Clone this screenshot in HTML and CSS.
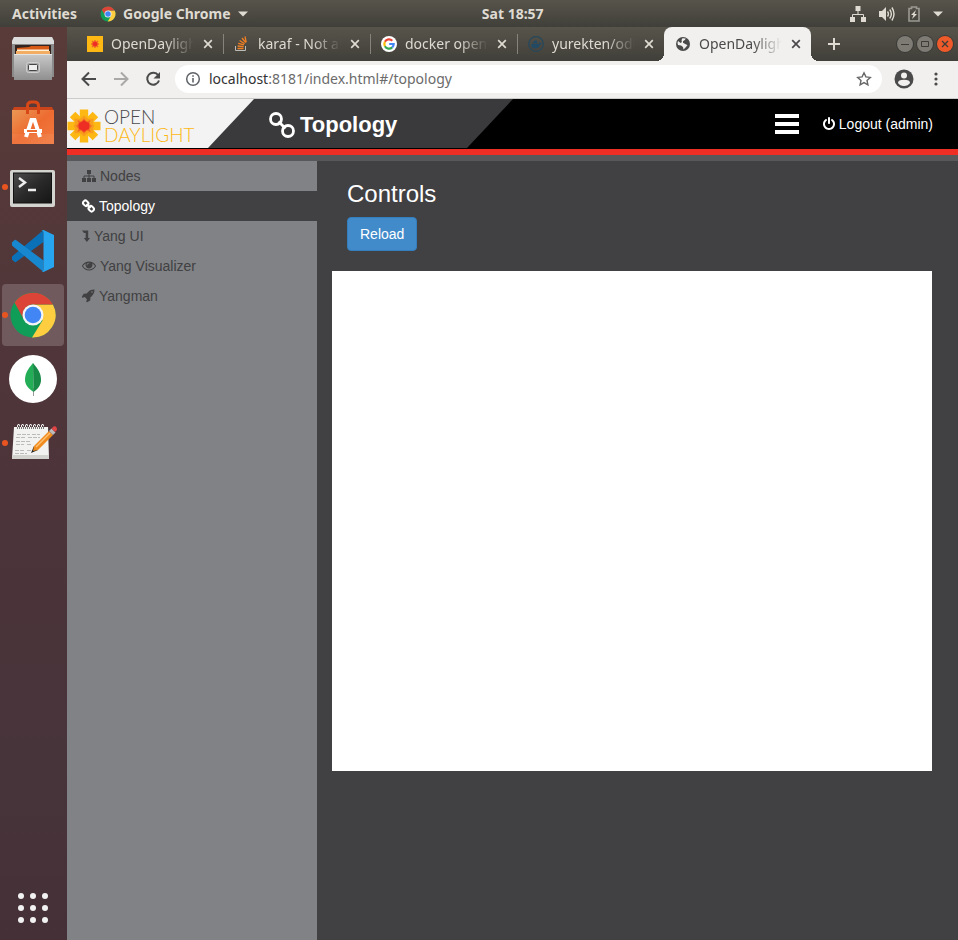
FILE: index.html
```html
<!DOCTYPE html>
<html lang="en">
<head>
<meta charset="utf-8">
<meta name="viewport" content="width=device-width, initial-scale=1">
<title>OpenDaylight Dlux</title>
<link rel="stylesheet" href="styles.css">
</head>
<body>
<svg class="defs" aria-hidden="true">
  <defs>
    <symbol id="chrome" viewBox="0 0 48 48">
      <circle cx="24" cy="24" r="22.500" fill="#109d58"/>
      <path d="M24 13.500H43.900A22.500 22.500 0 0 1 23 46.500L33.500 29.500Z" fill="#ffcd40"/>
      <path d="M5.500 11.500A22.500 22.500 0 0 1 43.900 13.500H24A10.500 10.500 0 0 0 14.500 28Z" fill="#db4437"/>
      <circle cx="24" cy="24" r="10.500" fill="#f5f5f5"/>
      <circle cx="24" cy="24" r="8.300" fill="#4285f4"/>
    </symbol>
    <symbol id="cross" viewBox="0 0 10 10">
      <path d="M1.200 1.200 8.800 8.800M8.800 1.200 1.200 8.800" fill="none" stroke="currentColor" stroke-width="1.700"/>
    </symbol>
    <symbol id="link" viewBox="0 0 26 26">
      <g fill="none" stroke="currentColor" stroke-width="2.800">
        <circle cx="7" cy="7" r="5.500"/><circle cx="19" cy="19" r="5.500"/><path d="M9.500 9.500l7 7"/>
      </g>
    </symbol>
  </defs>
</svg>

<header class="panel">
  <div class="panel-left">
    <button class="panel-item" type="button">Activities</button>
    <button class="panel-item app-menu" type="button">
      <svg width="16" height="16" aria-hidden="true"><use href="#chrome"/></svg>
      <span>Google Chrome</span>
      <svg width="10" height="6" viewBox="0 0 10 6" aria-hidden="true"><path d="M0 .5h10L5 5.500Z" fill="currentColor"/></svg>
    </button>
  </div>
  <time class="clock">Sat 18:57</time>
  <div class="tray">
    <svg width="16" height="16" viewBox="0 0 16 16" aria-hidden="true"><path d="M5.500 0h5v5h-5zM0 11h5v5H0zM11 11h5v5h-5z" fill="currentColor"/><path d="M8 5v3M2.500 11V8.500h11V11" fill="none" stroke="currentColor"/></svg>
    <svg width="16" height="16" viewBox="0 0 16 16" aria-hidden="true"><path d="M0 5h3l4-4v14l-4-4H0Z" fill="currentColor"/><path d="M8.500 5.500q1.800 2.500 0 5M10.700 3.500q3.300 4.500 0 9M12.900 1.500q4.200 6.500 0 13" fill="none" stroke="currentColor" stroke-width="1.400"/></svg>
    <svg width="12" height="16" viewBox="0 0 12 16" aria-hidden="true"><path d="M1 2.500h2.500V1h5v1.500H11V15H1Z" fill="none" stroke="#9b9993" stroke-width="1.600"/><path d="M8 4 3 9h2.500L4 13l5-5H6.500Z" fill="currentColor"/></svg>
    <svg width="10" height="6" viewBox="0 0 10 6" aria-hidden="true"><path d="M0 .5h10L5 5.500Z" fill="currentColor"/></svg>
  </div>
</header>

<div class="desktop">
  <nav class="dock" aria-label="Launcher">
    <button class="dock-item" type="button" aria-label="Files">
      <svg width="48" height="48" viewBox="0 0 48 48" aria-hidden="true">
        <defs><linearGradient id="steel" x2="0" y2="1"><stop stop-color="#c9c9c9"/><stop offset="1" stop-color="#8f8f8f"/></linearGradient></defs>
        <path d="M5 2h38l2 4v36H3V6Z" fill="#8b8b8b"/><path d="M5 2h38l2 4v3H3V6Z" fill="#dcdcdc"/>
        <path d="M6 10h36v10H6Z" fill="#332420"/><path d="M8 13l12-1 2-1h18v9H8Z" fill="#d75b16"/><path d="M7 16h34v4H7Z" fill="#f3ad62"/><path d="M8 14.500h32v1.500H8Z" fill="#fff0d8"/>
        <path d="M5 19h38v26H5Z" fill="url(#steel)"/><path d="M5 19h38v1H5Z" fill="#e4e4e4"/>
        <rect x="17.500" y="27.500" width="13" height="10" rx="2" fill="#aaa" stroke="#cfcfcf"/><rect x="19.500" y="29.500" width="9" height="6" rx="1" fill="#eee" stroke="#444"/>
      </svg>
    </button>
    <button class="dock-item" type="button" aria-label="Ubuntu Software">
      <svg width="48" height="48" viewBox="0 -1 48 48" aria-hidden="true">
        <defs><linearGradient id="bag" x2="1" y2="1"><stop stop-color="#e99855"/><stop offset=".5" stop-color="#ee6b30"/><stop offset="1" stop-color="#f17c43"/></linearGradient></defs>
        <path d="M5 7h38l2 4H3Z" fill="#c9441a"/><path d="M3 10h42v34H3Z" fill="url(#bag)"/><path d="M3 34h42v10H3Z" fill="#fff" opacity=".06"/>
        <path d="M18.500 14V6q0-4 4-4h3q4 0 4 4v8" fill="none" stroke="#d84817" stroke-width="3"/>
        <path d="M17 37 22.500 20h3L31 37M15 31h18" fill="none" stroke="#fff" stroke-width="4"/><path d="M18 31h10" stroke="#ee6b30" stroke-width="2"/>
      </svg>
    </button>
    <button class="dock-item running" type="button" aria-label="Terminal">
      <svg width="48" height="48" viewBox="0 -1 48 48" aria-hidden="true">
        <defs><linearGradient id="screen" x2="1" y2="1"><stop stop-color="#4c4c4c"/><stop offset=".5" stop-color="#2a2a2a"/><stop offset="1" stop-color="#151515"/></linearGradient></defs>
        <rect x="1" y="6" width="45" height="37" rx="2" fill="#d3d3d0"/><rect x="4.500" y="9" width="38" height="30" fill="url(#screen)" stroke="#111"/>
        <path d="m10 14 6 4.500L10 23M19 26h8" fill="none" stroke="#eee" stroke-width="2.400"/>
      </svg>
    </button>
    <button class="dock-item" type="button" aria-label="Visual Studio Code">
      <svg width="48" height="48" viewBox="0 0 48 48" aria-hidden="true">
        <path d="M3 29.500 34.500 3v12L7 35q-1 .5-2-.5l-2-2Z" fill="#0a70b8"/><path d="M7 13q-1-.5-2 .5l-2 2V18.500L34.500 45V33.500Z" fill="#1788d0"/><path d="M32.500 3.500 34.500 3 45 8v32l-10.500 5-2-.5q2 .5 2-2v-37q0-2-2-2Z" fill="#27a5ef"/>
      </svg>
    </button>
    <button class="dock-item running active" type="button" aria-label="Google Chrome">
      <svg width="48" height="48" aria-hidden="true"><use href="#chrome"/></svg>
    </button>
    <button class="dock-item" type="button" aria-label="MongoDB Compass">
      <svg width="48" height="48" viewBox="0 0 48 48" aria-hidden="true">
        <circle cx="24" cy="24" r="24" fill="#fff"/><path d="M24 33h1v8h-1Z" fill="#999"/><path d="M24 8C19 14 16 18 16 25c0 5 4 9 8.500 12Z" fill="#23ad56"/><path d="M24 8c5 6 8 10 8 17 0 5-3 9-7.500 12Z" fill="#178a48"/>
      </svg>
    </button>
    <button class="dock-item running" type="button" aria-label="Text Editor">
      <svg width="48" height="48" viewBox="0 0 48 48" aria-hidden="true">
        <path d="M5 8h34l1 32H3Z" fill="#f2f2f0"/><path d="M3 36h37v4H3Z" fill="#d2d2cf"/>
        <path d="M8 15.500h13m2 0h8M7 18.500h9m3 0h12M7 22.500h14M7 25.500h8m3 0h5M6 31.500h9m3 0h6M6 34.500h12" stroke="#bbb" stroke-dasharray="4 1" fill="none"/>
        <path d="M8.500 10V6q2-2 2 1v3m2 0V6q2-2 2 1v3m2 0V6q2-2 2 1v3m2 0V6q2-2 2 1v3m2 0V6q2-2 2 1v3m2 0V6q2-2 2 1v3m2 0V6q2-2 2 1v3" fill="none" stroke="#777"/><path d="M8.500 8V6q2-2 2 1m2 1V6q2-2 2 1m2 1V6q2-2 2 1m2 1V6q2-2 2 1m2 1V6q2-2 2 1m2 1V6q2-2 2 1m2 1V6q2-2 2 1" fill="none" stroke="#eee"/>
        <path d="m22 34 3-7 4 4Z" fill="#222"/><path d="m25 27 15-15 4 4-15 15-5 1Z" fill="#f08c1e"/><path d="m27 28 14-14" stroke="#ffc070" stroke-width="1.500"/><path d="m40 12 2.500-2.500 4 4L44 16Z" fill="#bbb"/><path d="m42.500 9.500 2-2q2-1 3 1t0 3l-1.500 1.500Z" fill="#e04444"/>
      </svg>
    </button>
    <button class="dock-item app-grid" type="button" aria-label="Show Applications">
      <svg width="32" height="32" viewBox="0 0 32 32" fill="#f2f2f2" aria-hidden="true">
        <circle cx="4" cy="4" r="3"/><circle cx="16" cy="4" r="3"/><circle cx="28" cy="4" r="3"/><circle cx="4" cy="16" r="3"/><circle cx="16" cy="16" r="3"/><circle cx="28" cy="16" r="3"/><circle cx="4" cy="28" r="3"/><circle cx="16" cy="28" r="3"/><circle cx="28" cy="28" r="3"/>
      </svg>
    </button>
  </nav>

  <div class="browser">
    <div class="tabstrip">
      <div class="tabs">
        <div class="tab">
          <svg width="16" height="16" viewBox="0 0 16 16" aria-hidden="true"><path d="M0 0h16v16H0Z" fill="#fdb813"/><path d="M8 4v8M4 8h8M5 5l6 6M11 5l-6 6" stroke="#f0672a" stroke-width="1.500"/><circle cx="8" cy="8" r="2.500" fill="#ee2e24"/></svg>
          <span class="tab-title">OpenDaylight Dlux</span>
          <button class="tab-close" type="button" aria-label="Close tab"><svg width="10" height="10"><use href="#cross"/></svg></button>
        </div>
        <div class="tab">
          <svg width="16" height="16" viewBox="0 0 16 16" fill="none" aria-hidden="true"><path d="M1.500 10v4.500h10V10" stroke="#bcbbb8"/><path d="M3.500 12.500h6M3.600 10l6 .7M4.200 7.300l5.800 1.600M5.600 4.500l5 3.200M8 2l3.700 4.700M11 .5l1.200 5.800" stroke="#f48024" stroke-width="1.300"/></svg>
          <span class="tab-title">karaf - Not able to</span>
          <button class="tab-close" type="button" aria-label="Close tab"><svg width="10" height="10"><use href="#cross"/></svg></button>
        </div>
        <div class="tab">
          <svg width="16" height="16" viewBox="0 0 16 16" fill="none" stroke-width="2.200" aria-hidden="true"><circle cx="8" cy="8" r="8" fill="#fff"/><path d="M11.300 4.700A4.700 4.700 0 0 0 3.900 5.800" stroke="#ea4335"/><path d="M3.900 5.800a4.700 4.700 0 0 0 0 4.400" stroke="#fbbc05"/><path d="M3.900 10.200a4.700 4.700 0 0 0 7.300 1.200" stroke="#34a853"/><path d="M11.200 11.400A4.700 4.700 0 0 0 12.700 8H8.200" stroke="#4285f4"/></svg>
          <span class="tab-title">docker opendaylight</span>
          <button class="tab-close" type="button" aria-label="Close tab"><svg width="10" height="10"><use href="#cross"/></svg></button>
        </div>
        <div class="tab">
          <svg width="16" height="16" viewBox="0 0 16 16" aria-hidden="true"><circle cx="8" cy="8" r="7.300" fill="none" stroke="#27485c" stroke-width="1.300"/><path d="M3 8h7.500q1 0 1-2 1 .5 1.200 1.500H14Q13 9 12 9q-1.500 3.500-5 3.500Q3 12.500 3 8ZM4.500 6h5v1.500h-5ZM6 4.500h3V6H6Z" fill="#234a62"/></svg>
          <span class="tab-title">yurekten/odl-docker</span>
          <button class="tab-close" type="button" aria-label="Close tab"><svg width="10" height="10"><use href="#cross"/></svg></button>
        </div>
        <div class="tab current">
          <svg width="16" height="16" viewBox="0 0 16 16" aria-hidden="true"><circle cx="8" cy="8" r="7" fill="#4a4a4a"/><path d="M7 2.500q2-.8 4 .3L9.500 4.500 8 5v2l2 .3L12.500 9 11 11l-2.500 2.500L8 11 6 9.500 3 9Q2 7 3 5l2.500 2L7 6l-.5-1Z" fill="#f1f0ef"/><path d="m8 6 3-3 3 3-1 3-3-1Z" fill="#4a4a4a"/></svg>
          <span class="tab-title">OpenDaylight Dlux</span>
          <button class="tab-close" type="button" aria-label="Close tab"><svg width="10" height="10"><use href="#cross"/></svg></button>
        </div>
      </div>
      <button class="new-tab" type="button" aria-label="New tab"><svg width="12" height="12" viewBox="0 0 12 12"><path d="M6 0v12M0 6h12" stroke="currentColor" stroke-width="2"/></svg></button>
      <div class="window-buttons">
        <button class="wbtn" type="button" aria-label="Minimize"><svg width="16" height="16" viewBox="0 0 16 16"><path d="M4 8.500h8" stroke="currentColor"/></svg></button>
        <button class="wbtn" type="button" aria-label="Maximize"><svg width="16" height="16" viewBox="0 0 16 16"><path d="M4.500 5.500h7v5h-7Z" fill="none" stroke="currentColor"/></svg></button>
        <button class="wbtn wclose" type="button" aria-label="Close"><svg width="16" height="16" viewBox="0 0 16 16"><path d="m5 5 6 6M11 5l-6 6" stroke="currentColor" stroke-width="1.300"/></svg></button>
      </div>
    </div>

    <div class="toolbar">
      <button class="tool" type="button" aria-label="Back"><svg width="16" height="16" viewBox="0 0 16 16"><path d="M15 8H2M8 1.500 1.500 8 8 14.500" fill="none" stroke="currentColor" stroke-width="2"/></svg></button>
      <button class="tool off" type="button" aria-label="Forward"><svg width="16" height="16" viewBox="0 0 16 16"><path d="M1 8h13M8 1.500 14.500 8 8 14.500" fill="none" stroke="currentColor" stroke-width="2"/></svg></button>
      <button class="tool" type="button" aria-label="Reload page"><svg width="16" height="16" viewBox="0 0 16 16"><path d="M13.200 4.300A6 6 0 1 0 14 9.500" fill="none" stroke="currentColor" stroke-width="2"/><path d="M15 1v6.500H8.500Z" fill="currentColor"/></svg></button>
      <div class="omnibox">
        <svg width="16" height="16" viewBox="0 0 16 16" aria-hidden="true"><circle cx="8" cy="8" r="6.300" fill="none" stroke="#5f6368" stroke-width="1.500"/><path d="M8 7v4.500M8 4.200v1.600" stroke="#5f6368" stroke-width="1.600"/></svg>
        <a class="url" href="#/topology"><span class="host">localhost</span>:8181/index.html#/topology</a>
        <button class="tool" type="button" aria-label="Bookmark this page"><svg width="16" height="16" viewBox="0 0 16 16"><path d="m8 1.800 1.900 4.100 4.400.5-3.300 3 .9 4.400L8 11.600l-3.900 2.200.9-4.400-3.300-3 4.400-.5Z" fill="none" stroke="#666" stroke-width="1.400"/></svg></button>
      </div>
      <button class="tool" type="button" aria-label="Profile"><svg width="20" height="20" viewBox="0 0 20 20"><circle cx="10" cy="10" r="9.500" fill="currentColor"/><circle cx="10" cy="6.500" r="3" fill="#f1f0ef"/><path d="M4 14q0-3.200 6-3.200t6 3.200q-2 3-6 3t-6-3Z" fill="#f1f0ef"/></svg></button>
      <button class="tool menu" type="button" aria-label="Menu"><svg width="4" height="14" viewBox="0 0 4 14" fill="currentColor"><circle cx="2" cy="2" r="1.600"/><circle cx="2" cy="7" r="1.600"/><circle cx="2" cy="12" r="1.600"/></svg></button>
    </div>

    <div class="page">
      <div class="masthead">
        <div class="brand-bar">
          <a class="logo" href="#/">
            <svg width="34" height="34" viewBox="0 0 34 34" aria-hidden="true">
              <path d="M12.800.5h8.400v33h-8.400ZM.5 12.800h33v8.400H.5Z" fill="#fdb813"/>
              <path d="m8.300 2.800 22.900 22.900-5.500 5.500L2.800 8.300ZM25.700 2.800 2.800 25.700l5.500 5.500L31.200 8.300Z" fill="#fdb813"/>
              <path d="m17 6.500 4.200 3.500 5.400-.6-.6 5.400 1.500 2.200-1.500 2.200.6 5.400-5.400-.6L17 27.500 12.800 24l-5.400.6.6-5.400L6.500 17 8 14.800l-.6-5.400 5.400.6Z" fill="#f99d1c"/>
              <path d="m17 9.500 3 3 3.500-1.500-1 3.500 2.500 2.500-2.500 2.500 1 3.500-3.500-1.500-3 3-3-3-3.500 1.500 1-3.500L9 17l2.500-2.500-1-3.500 3.500 1.500Z" fill="#f36c21"/>
              <path d="m17 11 2.500 2 2.500 1 .5 3-.5 3-2.500 1-2.500 2-2.500-2-2.500-1-.5-3 .5-3 2.500-1Z" fill="#ee2e24"/>
            </svg>
            <span class="wordmark"><span>OPEN</span><span class="gold">DAYLIGHT</span></span>
          </a>
          <div class="page-name"><svg width="26" height="26" aria-hidden="true"><use href="#link"/></svg><span>Topology</span></div>
        </div>
        <div class="actions">
          <button class="burger" type="button" aria-label="Toggle navigation"><svg width="24" height="20" viewBox="0 0 24 20"><path d="M0 0h24v4H0ZM0 8h24v4H0ZM0 16h24v4H0Z" fill="#fff"/></svg></button>
          <a class="logout" href="#/login"><svg width="12" height="14" viewBox="128 0 1536 1792" aria-hidden="true"><path fill="currentColor" d="M1664 896q0 156-61 298t-164 245-245 164-298 61-298-61-245-164-164-245-61-298q0-182 80.500-343t226.500-270q43-32 95.500-25t83.500 50q32 42 24.500 94.500t-49.500 84.500q-98 74-151.500 181t-53.500 228q0 104 40.500 198.500t109.500 163.500 163.500 109.500 198.500 40.500 198.500-40.500 163.500-109.500 109.500-163.500 40.500-198.500q0-121-53.500-228t-151.500-181q-42-32-49.500-84.500t24.500-94.500q31-43 84-50t95 25q146 109 226.500 270t80.500 343zm-640-768v640q0 52-38 90t-90 38-90-38-38-90v-640q0-52 38-90t90-38 90 38 38 90z"/></svg>Logout (admin)</a>
        </div>
      </div>
      <div class="content">
        <nav class="side" aria-label="Modules">
          <a href="#/node"><svg width="14" height="14" viewBox="0 0 14 14" aria-hidden="true"><path d="M5 1h4v4H5ZM0 9h4v4H0ZM5 9h4v4H5ZM10 9h4v4h-4Z" fill="currentColor"/><path d="M7 5v4M2 9V7h10v2" fill="none" stroke="currentColor"/></svg>Nodes</a>
          <a class="selected" href="#/topology"><svg width="13" height="14" viewBox="0 0 26 26" aria-hidden="true"><g fill="none" stroke="currentColor" stroke-width="4"><rect x="2" y="3" width="11" height="9" rx="4" transform="rotate(45 7.500 7.500)"/><rect x="13" y="14" width="11" height="9" rx="4" transform="rotate(45 18.500 18.500)"/><path d="m9 9 8 8"/></g></svg>Topology</a>
          <a href="#/yangui"><svg width="8" height="14" viewBox="0 0 8 14" aria-hidden="true"><path d="M0 1.500h6.200v7.500H8L4.900 13 1.800 9h1.900V4H2Z" fill="currentColor"/></svg>Yang UI</a>
          <a href="#/yangvisualizer"><svg width="14" height="14" viewBox="0 64 1792 1792" aria-hidden="true"><path fill="currentColor" d="M1664 960q-152-236-381-353 61 104 61 225 0 185-131.500 316.500t-316.500 131.500-316.500-131.500-131.500-316.500q0-121 61-225-229 117-381 353 133 205 333.500 326.500t434.500 121.500 434.500-121.500 333.500-326.500zm-720-384q0-20-14-34t-34-14q-125 0-214.500 89.500t-89.500 214.500q0 20 14 34t34 14 34-14 14-34q0-86 61-147t147-61q20 0 34-14t14-34zm848 384q0 34-20 69-140 230-376.500 368.500t-499.500 138.500-499.500-139-376.500-368q-20-35-20-69t20-69q140-229 376.500-368t499.500-139 499.500 139 376.500 368q20 35 20 69z"/></svg>Yang Visualizer</a>
          <a href="#/yangman"><svg width="13" height="14" viewBox="64 64 1664 1792" aria-hidden="true"><path fill="currentColor" d="M1440 448q0-40-28-68t-68-28-68 28-28 68 28 68 68 28 68-28 28-68zm224-288q0 249-75.500 430.500t-253.500 360.500q-81 80-195 176l-20 379q-2 16-16 26l-384 224q-7 4-16 4-12 0-23-9l-64-64q-13-14-8-32l85-276-281-281-276 85q-3 1-9 1-14 0-23-9l-64-64q-17-19-5-39l224-384q10-14 26-16l379-20q96-114 176-195 188-187 358-258t431-71q14 0 24 9.500t10 22.500z"/></svg>Yangman</a>
        </nav>
        <main class="main">
          <section class="controls">
            <h3>Controls</h3>
            <button class="btn" type="button">Reload</button>
          </section>
          <div class="graph"></div>
        </main>
      </div>
    </div>
  </div>
</div>
</body>
</html>
```

FILE: styles.css
```css
* { box-sizing: border-box; }

body {
  margin: 0;
  min-height: 100vh;
  display: flex;
  flex-direction: column;
  font: 14px/20px "Liberation Sans", Arial, sans-serif;
  background: #414042;
}

button {
  padding: 0;
  border: 0;
  background: none;
  color: inherit;
  font: inherit;
}

a { color: inherit; text-decoration: none; }
svg { display: block; flex: none; }
.defs { position: absolute; width: 0; height: 0; }

/* Desktop panel */
.panel {
  display: grid;
  grid-template-columns: 20fr auto 17fr;
  align-items: center;
  height: 27px;
  padding: 0 15px 0 12px;
  background: linear-gradient(#57544b, #403f39);
  color: #dfdbd2;
  font: bold 14px/26px "Noto Sans", "Open Sans", sans-serif;
}

.panel-left, .app-menu, .tray { display: flex; align-items: center; }
.panel-left { gap: 23px; }
.app-menu { gap: 7px; }
.tray { justify-content: flex-end; gap: 13px; }
.clock { font-size: 14px; }

.desktop { flex: 1; display: flex; }

/* Launcher */
.dock {
  flex: none;
  display: flex;
  flex-direction: column;
  gap: 2px;
  width: 67px;
  padding: 1px 3px 1px 2px;
  background: linear-gradient(#593b39, #4c343a 50%, #47343a 80%, #453037);
}

.dock-item {
  position: relative;
  display: flex;
  align-items: center;
  justify-content: center;
  height: 62px;
  border-radius: 4px;
}

.dock-item.active { background: #705a5e; }

.dock-item.running::before {
  content: "";
  position: absolute;
  left: 0;
  top: 28px;
  width: 6px;
  height: 6px;
  border-radius: 50%;
  background: #e95420;
}

.app-grid { margin-top: auto; }

/* Browser window */
.browser {
  flex: 1;
  min-width: 0;
  display: flex;
  flex-direction: column;
}

.tabstrip {
  display: flex;
  align-items: center;
  height: 34px;
  padding: 0 5px 0 9px;
  background: linear-gradient(#57544b, #403f39);
  color: #dfdbd2;
  font: 14px/20px "Noto Sans", "Open Sans", sans-serif;
}

.tabs { display: flex; flex: 0 1 735px; min-width: 0; }

.tab {
  position: relative;
  flex: 1;
  min-width: 0;
  display: flex;
  align-items: center;
  height: 34px;
  padding: 0 10px 0 11px;
}

.tab:nth-child(-n+3)::after {
  content: "";
  position: absolute;
  right: -1px;
  top: 7px;
  width: 1px;
  height: 20px;
  background: #85837b;
}

.tab-title {
  flex: 1;
  min-width: 0;
  margin: 0 9px 0 8px;
  overflow: hidden;
  white-space: nowrap;
  -webkit-mask-image: linear-gradient(90deg, #000 65%, transparent);
  mask-image: linear-gradient(90deg, #000 65%, transparent);
}

.tab.current {
  border-radius: 8px 8px 0 0;
  background: #f1f0ef;
  color: #4a4a4a;
}

.tab.current::before, .tab.current::after {
  content: "";
  position: absolute;
  bottom: 0;
  width: 8px;
  height: 8px;
  background: radial-gradient(circle at 0 0, transparent 8px, #f1f0ef 8px);
}

.tab.current::before { left: -8px; }
.tab.current::after { right: -8px; background: radial-gradient(circle at 100% 0, transparent 8px, #f1f0ef 8px); }

.new-tab { margin-left: 17px; }
.window-buttons { display: flex; gap: 4px; margin-left: auto; }

.wbtn {
  border-radius: 50%;
  background: #7d7b74;
  color: #3c3b37;
  box-shadow: 0 0 0 1px #3c3b37;
}

.wclose { background: #ee5a2a; }

.toolbar {
  display: flex;
  align-items: center;
  gap: 16px;
  height: 38px;
  padding: 0 20px 2px 14px;
  border-bottom: 1px solid #cbcbc9;
  background: #f1f0ef;
  color: #4a4a4a;
}

.tool.off { color: #a9a8a7; }
.tool.menu { margin-left: 4px; }

.omnibox {
  flex: 1;
  min-width: 0;
  display: flex;
  align-items: center;
  gap: 8px;
  height: 28px;
  margin: 0 -4px 0 -2px;
  padding: 0 10px;
  border-radius: 14px;
  background: #fff;
  color: #6b6b6b;
  font: 14px/20px "Noto Sans", "Open Sans", sans-serif;
}

.url { flex: 1; min-width: 0; overflow: hidden; white-space: nowrap; }
.host { color: #333; }

/* Application */
.page { flex: 1; display: flex; flex-direction: column; }

.masthead {
  display: flex;
  justify-content: space-between;
  height: 56px;
  padding-bottom: 1px;
  border-bottom: 6px solid #ee2e24;
  background: #000;
}

.brand-bar {
  display: flex;
  width: 446px;
  background: #3a3a3c;
}

.brand-bar, .logo { clip-path: polygon(0 0, 100% 0, calc(100% - 46px) 100%, 0 100%); }

.logo {
  display: flex;
  align-items: center;
  gap: 3px;
  width: 187px;
  padding-top: 4px;
  background: #f3f3f3;
}

.wordmark {
  display: flex;
  flex-direction: column;
  color: #4b4b4d;
  font: 300 19px/18px Lato, "Open Sans", sans-serif;
}

.gold { color: #fdb813; }

.page-name {
  display: flex;
  align-items: center;
  gap: 5px;
  padding: 2px 0 0 15px;
  color: #fff;
  font-size: 22px;
  font-weight: bold;
}

.actions {
  display: flex;
  align-items: center;
  gap: 24px;
  padding-right: 25px;
  color: #fff;
}

.logout { display: flex; align-items: center; gap: 4px; }

.content {
  flex: 1;
  display: flex;
  border-top: 6px solid #58585a;
}

.side { flex: none; width: 250px; background: #808285; color: #414042; }

.side a {
  display: flex;
  align-items: center;
  gap: 4px;
  height: 30px;
  padding: 0 15px;
}

.side .selected { background: #414042; color: #fff; }

.main {
  flex: 1;
  min-width: 0;
  padding: 20px 26px 20px 15px;
  background: #414042;
}

.controls { padding: 0 15px 20px; }

h3 {
  margin: 0 0 10px;
  color: #fff;
  font-size: 24px;
  line-height: 26px;
  font-weight: normal;
}

.btn {
  padding: 6px 12px;
  border: 1px solid #357ebd;
  border-radius: 4px;
  background: #428bca;
  color: #fff;
}

.graph { height: 500px; background: #fff; }
```
